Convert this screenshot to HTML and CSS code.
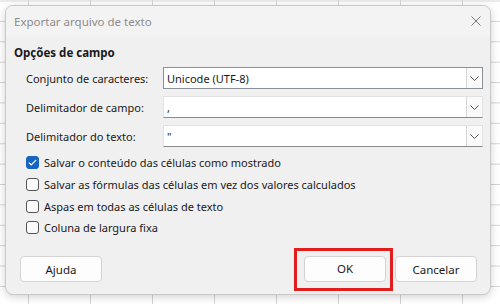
FILE: index.html
```html
<!DOCTYPE html>
<html lang="pt">
<head>
  <meta charset="UTF-8">
  <title>Exportar arquivo de texto</title>
  <link rel="stylesheet" href="styles.css">
</head>
<body>

<div class="dialog">
  <div class="titlebar">
    <span class="title-text">Exportar arquivo de texto</span>
    <svg class="close-icon" width="10" height="10" viewBox="0 0 10 10">
      <path d="M0.5 0.5 L9.5 9.5 M9.5 0.5 L0.5 9.5" stroke="#7a7a7a" stroke-width="1" fill="none"/>
    </svg>
  </div>

  <div class="dialog-body">
    <div class="group-title">Opções de campo</div>

    <div class="fields">
      <label class="field-label">Conjunto de caracteres:</label>
      <div class="combo combo-focus">
        <span class="combo-value">Unicode (UTF-8)</span>
        <span class="combo-btn"><svg width="9" height="5" viewBox="0 0 9 5"><path d="M0.5 0.5 L4.5 4.5 L8.5 0.5" stroke="#555" fill="none"/></svg></span>
      </div>

      <label class="field-label">Delimitador de campo:</label>
      <div class="combo">
        <span class="combo-value">,</span>
        <span class="combo-btn"><svg width="9" height="5" viewBox="0 0 9 5"><path d="M0.5 0.5 L4.5 4.5 L8.5 0.5" stroke="#555" fill="none"/></svg></span>
      </div>

      <label class="field-label">Delimitador do texto:</label>
      <div class="combo">
        <span class="combo-value">"</span>
        <span class="combo-btn"><svg width="9" height="5" viewBox="0 0 9 5"><path d="M0.5 0.5 L4.5 4.5 L8.5 0.5" stroke="#555" fill="none"/></svg></span>
      </div>
    </div>

    <div class="checks">
      <div class="check-row">
        <span class="checkbox checked"><svg width="9" height="7" viewBox="0 0 9 7"><path d="M0.8 3.6 L3.2 5.8 L8.2 0.8" stroke="#fff" stroke-width="1.2" fill="none"/></svg></span>
        <span>Salvar o conteúdo das células como mostrado</span>
      </div>
      <div class="check-row">
        <span class="checkbox"></span>
        <span>Salvar as fórmulas das células em vez dos valores calculados</span>
      </div>
      <div class="check-row">
        <span class="checkbox"></span>
        <span>Aspas em todas as células de texto</span>
      </div>
      <div class="check-row">
        <span class="checkbox"></span>
        <span>Coluna de largura fixa</span>
      </div>
    </div>
  </div>

  <div class="footer">
    <button class="btn">Ajuda</button>
    <div class="spacer"></div>
    <span class="highlight"><button class="btn">OK</button></span>
    <button class="btn">Cancelar</button>
  </div>
</div>

</body>
</html>
```

FILE: styles.css
```css
body {
  margin: 0;
  width: 500px;
  height: 304px;
  overflow: hidden;
  font-family: "Noto Sans", Arial, sans-serif;
  font-size: 11px;
  color: #1a1a1a;
  background-color: #ffffff;
  background-image:
    linear-gradient(to right, #d4d4d4 1px, transparent 1px),
    linear-gradient(to bottom, #d4d4d4 1px, transparent 1px);
  background-size: 62px 20.4px;
  background-position: 28px 0.5px;
}
.dialog {
  margin: 5px 0 0 5px;
  width: 486px;
  height: 290px;
  background: #f0f0f0;
  border: 1px solid #c8c8c8;
  border-radius: 8px;
  box-shadow: 0 2px 8px rgba(0,0,0,0.18);
  box-sizing: border-box;
  display: flex;
  flex-direction: column;
  overflow: hidden;
}
.titlebar {
  height: 30px;
  background: #f3f3f3;
  display: flex;
  align-items: center;
  justify-content: space-between;
  padding: 0 9px 0 8px;
  flex-shrink: 0;
}
.title-text {
  color: #8c8c8c;
  font-size: 11.5px;
  margin-top: 1px;
}
.dialog-body {
  padding: 0 7px 0 8px;
}
.group-title {
  font-weight: bold;
  font-size: 11.5px;
  margin-top: 9px;
  line-height: 16px;
}
.fields {
  display: grid;
  grid-template-columns: 137px 1fr;
  row-gap: 7px;
  margin-top: 6px;
  padding-left: 12px;
}
.field-label {
  display: flex;
  align-items: center;
  height: 22px;
}
.combo {
  height: 22px;
  box-sizing: border-box;
  background: #ffffff;
  border: 1px solid #e2e2e2;
  border-bottom: 1px solid #8a8a8a;
  display: flex;
  align-items: center;
  justify-content: space-between;
  padding-left: 3px;
}
.combo-focus {
  border: 1px solid #8a9099;
}
.combo-btn {
  width: 16px;
  height: 20px;
  box-sizing: border-box;
  border-left: 1px solid #d6d6d6;
  background: #fafafa;
  display: flex;
  align-items: center;
  justify-content: center;
}
.checks {
  margin-top: 5px;
  padding-left: 12px;
}
.check-row {
  display: flex;
  align-items: center;
  height: 21.7px;
  gap: 5px;
}
.checkbox {
  width: 13px;
  height: 13px;
  box-sizing: border-box;
  border: 1px solid #555;
  border-radius: 3px;
  background: #fafafa;
  display: flex;
  align-items: center;
  justify-content: center;
}
.checkbox.checked {
  background: #1764c0;
  border-color: #1764c0;
}
.footer {
  margin-top: auto;
  display: flex;
  align-items: center;
  padding: 0 13px 12px 14px;
}
.spacer {
  flex: 1;
}
.btn {
  width: 82px;
  height: 26px;
  font-family: "Noto Sans", Arial, sans-serif;
  font-size: 11.5px;
  color: #1a1a1a;
  background: #fdfdfd;
  border: 1px solid #d3d3d3;
  border-radius: 4px;
}
.highlight {
  display: flex;
  border: 3px solid #e21d1d;
  padding: 5px 4px 6px 7px;
  margin: -9px 2px -9px 0;
}
```
